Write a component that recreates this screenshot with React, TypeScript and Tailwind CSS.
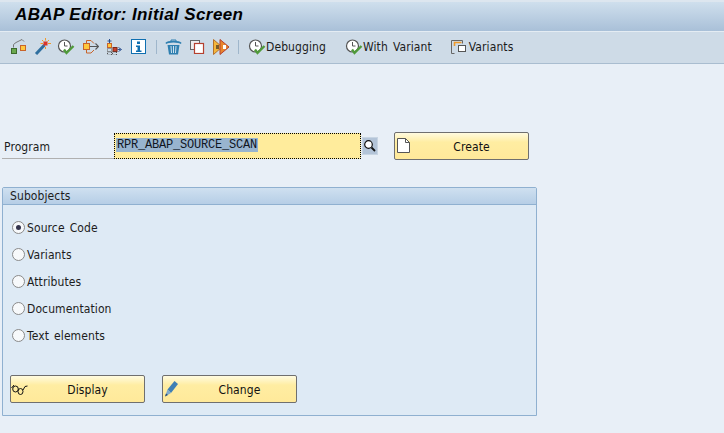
const uiFont = "font-['DejaVu_Sans_Condensed','DejaVu_Sans',sans-serif] tracking-[0.1px] [word-spacing:1.5px]";

function IconObjects() {
  return (
    <svg width="17" height="17" viewBox="0 0 17 17" fill="none">
      <rect x="1.500" y="10.500" width="5" height="5" fill="#6aa84f" stroke="#3d6b2c" />
      <rect x="10.500" y="7.500" width="5" height="5" fill="#ffc83d" stroke="#c8642b" />
      <path d="M3.500 9.500V6.500L6 4.500 12 1.500l2 2" stroke="#777" />
    </svg>
  );
}

function IconWand() {
  return (
    <svg width="17" height="17" viewBox="0 0 17 17" fill="none">
      <path d="M2 16 10.500 7" stroke="#2f6f9f" strokeWidth="3" />
      <rect x="9.500" y="3.500" width="4" height="4" fill="#d9352a" />
      <path d="M11.500 0v2.500M11.500 9v2M6.500 5.500h2.500M14 5.500h3M8 2l1.500 1.500M15 2l-1.500 1.500" stroke="#f09a2a" />
    </svg>
  );
}

function IconClockCheck() {
  return (
    <svg width="18" height="16" viewBox="0 0 18 16" fill="none">
      <circle cx="7.500" cy="7" r="6" fill="#fff" stroke="#555" strokeWidth="1.200" />
      <path d="M7.500 3v4h3" stroke="#555" />
      <path d="M7 10.500l2.500 3.500L16.500 7" stroke="#4f9a3a" strokeWidth="2.400" />
    </svg>
  );
}

function IconExport() {
  return (
    <svg width="17" height="17" viewBox="0 0 17 17" fill="none">
      <rect x="1.500" y="5.500" width="6" height="6" fill="#ffc83d" stroke="#c8642b" />
      <path d="M8 8.500h8.500M13.500 5.500l3 3-3 3" stroke="#555" strokeWidth="1.200" />
      <path d="M4.500 5V2.500h4.500L12 5.500M4.500 12v3h4.500l3-3" stroke="#c8642b" />
    </svg>
  );
}

function IconTree() {
  return (
    <svg width="16" height="16" viewBox="0 0 16 16" fill="none">
      <path d="M3.500 0v4M1.500 2h4M11.500 10.500h3M12.500 8.500 15.500 10.500l-3 2" stroke="#2b4f8f" />
      <rect x="1.500" y="4.500" width="4" height="4" fill="#ffc83d" stroke="#c8642b" />
      <rect x="7" y="8.500" width="4" height="4" fill="#c8402b" stroke="#7a2a1a" />
      <path d="M1.500 9.500h4v3h-4zM1.500 13h4v3h-4zM6.500 13h4v3h-4z" stroke="#555" strokeDasharray="1 1" />
    </svg>
  );
}

function IconInfo() {
  return (
    <svg width="15" height="15" viewBox="0 0 15 15" fill="none">
      <rect x="0.500" y="0.500" width="14" height="14" fill="#fff" stroke="#0f6fb0" />
      <rect x="6" y="2.500" width="3" height="2.500" fill="#0f6fb0" />
      <path d="M5 6.500h4v5h1.500v1.500h-5.500v-1.500h1.500v-3.500h-1.500z" fill="#0f6fb0" />
    </svg>
  );
}

function IconTrash() {
  return (
    <svg width="17" height="16" viewBox="0 0 17 16" fill="none">
      <path d="M1 4.500C3 2 14 2 16 4.500" stroke="#2f7fb0" strokeWidth="1.800" />
      <path d="M6 2V1h5v1" stroke="#2f7fb0" />
      <path d="M2.500 6h12l-1.500 9.500H4z" fill="#2f7fb0" />
      <path d="M6 7l.5 7M8.500 7v7M11 7l-.5 7" stroke="#cfe3f0" />
    </svg>
  );
}

function IconCopy() {
  return (
    <svg width="15" height="14" viewBox="0 0 15 14" fill="none">
      <rect x="0.500" y="0.500" width="9" height="9" fill="#eee" stroke="#666" />
      <rect x="4.500" y="3.500" width="9" height="10" fill="#fff" stroke="#b5402f" strokeWidth="1.200" />
    </svg>
  );
}

function IconActivate() {
  return (
    <svg width="17" height="16" viewBox="0 0 17 16" fill="none">
      <path d="M.5.500 9 8 .5 15.500z" fill="#f4b63a" stroke="#b5702a" />
      <path d="M7 .500 16 8 7 15.500z" fill="#e8862e" stroke="#b5402f" />
      <rect x="10" y="6" width="3" height="4" fill="#fff" />
      <rect x="3" y="6" width="3" height="4" fill="#7a5a2a" />
    </svg>
  );
}

function IconVariants() {
  return (
    <svg width="19" height="16" viewBox="0 0 19 16" fill="none">
      <path d="M4.500 14.500h-3v-13h11v3" stroke="#666" />
      <path d="M4.500 7V3.500h7" stroke="#f09a2a" strokeWidth="1.600" />
      <rect x="8.500" y="6.500" width="7" height="6" fill="#fff" stroke="#555" />
    </svg>
  );
}

function IconSearch() {
  return (
    <svg width="14" height="14" viewBox="0 0 14 14" fill="none">
      <circle cx="5.500" cy="5.500" r="3.800" fill="#fff" stroke="#111" strokeWidth="1.200" />
      <path d="M8.500 8.500 12 12" stroke="#111" strokeWidth="1.800" />
    </svg>
  );
}

function IconPage() {
  return (
    <svg width="13" height="15" viewBox="0 0 13 15" fill="none">
      <path d="M.500.500h8l4 4v10H.500z" fill="#fff" stroke="#555" />
      <path d="M8.500.500v4h4" stroke="#555" />
    </svg>
  );
}

function IconGlasses() {
  return (
    <svg width="17" height="13" viewBox="0 0 17 13" fill="none">
      <path d="M.5 5 3 2M12 7l2-3.500L16.500 3" stroke="#111" />
      <ellipse cx="4.500" cy="6" rx="2.800" ry="3" stroke="#111" />
      <ellipse cx="9.500" cy="8.500" rx="2.500" ry="3" stroke="#111" />
    </svg>
  );
}

function IconPencil() {
  return (
    <svg width="15" height="18" viewBox="0 0 15 18" fill="none">
      <path d="M3.500 9.500 10.500 1l3.500 3L7 13z" fill="#3f7fb5" />
      <path d="M3.500 9.500 1 16.500l6-3.500z" fill="#7fa9cc" />
      <path d="M1 16.500l1-3 2 1.500z" fill="#2a4f6f" />
    </svg>
  );
}

function ToolbarSep() {
  return <div className="w-px h-[14px] bg-[#9fb6cb]" />;
}

function ToolbarIcon({children}: {children: React.ReactNode}) {
  return <div className="w-[24px] h-[20px] flex items-center justify-center">{children}</div>;
}

function ToolbarText({icon, label, className}: {icon: React.ReactNode; label: string; className: string}) {
  return (
    <div className={`flex items-center text-[12px] text-[#1c1c1c] ${className}`}>
      {icon}
      <span>{label}</span>
    </div>
  );
}

function YellowButton({icon, iconClass, label, className}: {icon: React.ReactNode; iconClass: string; label: string; className: string}) {
  return (
    <div className={`relative h-[28px] w-[135px] pl-[20px] pt-px flex items-center justify-center border border-[#6f6f6f] rounded-[2px] text-[12px] text-[#111] bg-[linear-gradient(#fffbe0,#ffeda2_35%,#ffe99a)] ${className}`}>
      <span className={`absolute ${iconClass}`}>{icon}</span>
      <span>{label}</span>
    </div>
  );
}

function RadioRow({label, checked}: {label: string; checked?: boolean}) {
  return (
    <div className="h-[27px] flex items-center">
      <div className="w-[13px] h-[13px] rounded-full border border-[#8a8a8a] bg-[#f7f9fb] flex items-center justify-center ml-[2px] mr-[2px]">
        {checked && <div className="w-[5px] h-[5px] rounded-full bg-[#33334d]" />}
      </div>
      <span className="text-[12px] text-[#1c1c1c]">{label}</span>
    </div>
  );
}

export default function App() {
  return (
    <div className={`w-[724px] h-[433px] overflow-hidden bg-[#e8eff7] ${uiFont}`}>
      <div className="h-[31px] border-t-2 border-[#dde6ef] bg-[linear-gradient(#cfdfed,#a9c0d8)] pl-[15px] pb-[3px] flex items-center">
        <h1 className="font-['Liberation_Sans',sans-serif] font-bold italic text-[17px] tracking-[0.4px] [word-spacing:0] text-black">
          ABAP Editor: Initial Screen
        </h1>
      </div>
      <div className="h-[33px] border-t border-[#e4ecf3] border-b border-b-[#a9bdd0] bg-[#cedbe7] pl-[6px] pb-[2px] flex items-center">
        <ToolbarIcon><IconObjects /></ToolbarIcon>
        <ToolbarIcon><IconWand /></ToolbarIcon>
        <ToolbarIcon><IconClockCheck /></ToolbarIcon>
        <ToolbarIcon><IconExport /></ToolbarIcon>
        <ToolbarIcon><IconTree /></ToolbarIcon>
        <ToolbarIcon><IconInfo /></ToolbarIcon>
        <div className="ml-[6px] mr-[4px]"><ToolbarSep /></div>
        <ToolbarIcon><IconTrash /></ToolbarIcon>
        <ToolbarIcon><IconCopy /></ToolbarIcon>
        <ToolbarIcon><IconActivate /></ToolbarIcon>
        <div className="ml-[5px]"><ToolbarSep /></div>
        <ToolbarText icon={<IconClockCheck />} label="Debugging" className="ml-[9px]" />
        <ToolbarText icon={<IconClockCheck />} label="With Variant" className="ml-[19px]" />
        <ToolbarText icon={<IconVariants />} label="Variants" className="ml-[18px]" />
      </div>

      <div className="mt-[68px] flex items-start">
        <div className="w-[112px] h-[26px] ml-[2px] mt-[1px] border-b border-[#b0b0b0] pl-[2px] pt-[6px] text-[12px] leading-[16px] text-[#1c1c1c]">
          Program
        </div>
        <div className="w-[247px] h-[26px] mt-[1px] bg-[#ffec9c] border border-dotted border-black flex items-start pl-px pt-[4px]">
          <span className="font-['Liberation_Mono',monospace] text-[12px] tracking-[-0.2px] [word-spacing:0] h-[14px] leading-[15px] text-[#10161f] bg-[#98b4cf] pl-px pr-px">
            RPR_ABAP_SOURCE_SCAN
          </span>
        </div>
        <div className="w-[16px] h-[18px] ml-px mt-[5px] bg-[#b3c4d8] border border-[#c8d5e3] flex items-center justify-center">
          <IconSearch />
        </div>
        <YellowButton icon={<IconPage />} iconClass="left-[2px] top-[5px]" label="Create" className="ml-[16px]" />
      </div>

      <div className="mt-[27px] ml-[2px] w-[535px] h-[229px] border border-[#8fb0d0] rounded-t-[2px] bg-[#deeaf5]">
        <div className="h-[17px] bg-[linear-gradient(#cfe0f0,#b6cee6)] border-b border-[#8fb0d0] pl-[7px] flex items-center text-[12px] text-[#1c1c1c]">
          Subobjects
        </div>
        <div className="pt-[9px] pl-[7px]">
          <RadioRow label="Source Code" checked />
          <RadioRow label="Variants" />
          <RadioRow label="Attributes" />
          <RadioRow label="Documentation" />
          <RadioRow label="Text elements" />
        </div>
        <div className="mt-[26px] ml-[7px] flex">
          <YellowButton icon={<IconGlasses />} iconClass="left-0 top-[7px]" label="Display" className="" />
          <YellowButton icon={<IconPencil />} iconClass="left-px top-[4px]" label="Change" className="ml-[17px]" />
        </div>
      </div>
    </div>
  );
}
